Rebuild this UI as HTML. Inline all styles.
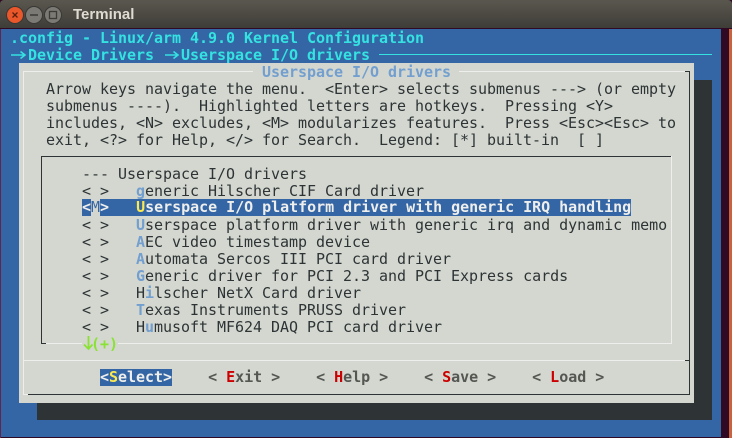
<!DOCTYPE html>
<html><head><meta charset="utf-8"><title>Terminal</title>
<style>
html,body{margin:0;padding:0;width:732px;height:438px;overflow:hidden;background:#300a24}
#w{position:relative;width:732px;height:438px;overflow:hidden;background:#300a24}
.a{position:absolute}
.r{position:absolute;left:1px;margin-top:1px;white-space:pre;height:17px;line-height:17px;font-family:"DejaVu Sans Mono","Liberation Mono",monospace;font-size:15px;letter-spacing:-0.03px;color:#2e3436}
.c{color:#34e2e2;font-weight:bold}
.h{color:#729fcf;font-weight:bold}
.b{color:#555753;font-weight:bold}
.e{color:#cc0000;font-weight:bold}
.s{background:#3465a4;color:#eeeeec;font-weight:bold}
.y{color:#fce94f;font-weight:bold}
.m{background:#d3d7cf;color:#3465a4;font-weight:normal}
.g{color:#8ae234;font-weight:bold}
</style></head><body><div id="w">
<div class="a" style="left:0;top:0;width:732px;height:29px;background:linear-gradient(#5a574f,#3f3d38);border-bottom:1px solid #300a24;box-sizing:border-box;border-radius:4px 4px 0 0"></div>
<svg class="a" style="left:0;top:0" width="80" height="28">
<circle cx="15" cy="15" r="8.5" fill="#e9572a" stroke="#3a3835"/>
<path d="M12.5 12.5l5 5M17.5 12.5l-5 5" stroke="#5a2110" stroke-width="1.3"/>
<circle cx="34" cy="15" r="8.5" fill="#7b7a74" stroke="#3a3835"/>
<path d="M30 15h8" stroke="#3c3b37" stroke-width="1.5"/>
<circle cx="53" cy="15" r="8.5" fill="#7b7a74" stroke="#3a3835"/>
<rect x="49.5" y="11.5" width="7" height="7" fill="none" stroke="#3c3b37" stroke-width="1.3"/>
</svg>
<div class="a" style="left:73px;top:6px;height:18px;line-height:18px;font-family:'Liberation Sans',sans-serif;font-weight:bold;font-size:15px;color:#dfdbd2">Terminal</div>

<div class="a" style="left:1px;top:29px;width:720px;height:408px;background:#3465a4"></div>
<div class="a" style="left:729px;top:29px;width:3px;height:409px;background:#c8623f"></div>
<div class="a" style="left:0;top:29px;width:1px;height:409px;background:#5e2750"></div>

<div class="r c" style="top:29px"> .config - Linux/arm 4.9.0 Kernel Configuration</div>
<div class="r c" style="top:46px">   Device Drivers   Userspace I/O drivers</div>
<svg class="a" style="left:0;top:46px" width="190" height="17"><path d="M11 9H25M20.5 5.5L25 9L20.5 12.5M165 9H178M173.5 5.5L178 9L173.5 12.5" fill="none" stroke="#34e2e2" stroke-width="1.6"/></svg>
<div class="a" style="left:379px;top:54px;width:333px;height:1px;background:#34e2e2"></div>

<div class="a" style="left:37px;top:80px;width:675px;height:340px;background:#2e3436"></div>
<div class="a" style="left:19px;top:63px;width:675px;height:340px;background:#d3d7cf"></div>

<!-- outer box -->
<div class="a" style="left:24px;top:71px;width:665px;height:1px;background:#eeeeec"></div>
<div class="a" style="left:23px;top:71px;width:1px;height:323px;background:#eeeeec"></div>
<div class="a" style="left:689px;top:71px;width:1px;height:324px;background:#2e3436"></div>
<div class="a" style="left:685px;top:71px;width:4px;height:1px;background:#2e3436"></div>
<div class="a" style="left:28px;top:394px;width:662px;height:1px;background:#2e3436"></div>
<div class="a" style="left:24px;top:360px;width:661px;height:1px;background:#eeeeec"></div>
<div class="a" style="left:685px;top:360px;width:4px;height:1px;background:#2e3436"></div>
<div class="a" style="left:23px;top:394px;width:5px;height:1px;background:#eeeeec"></div>

<!-- title -->
<div class="a" style="left:253px;top:63px;width:206px;height:17px;background:#d3d7cf"></div>
<div class="r h" style="top:63px">                             Userspace I/O drivers</div>

<div class="r" style="top:80px">     Arrow keys navigate the menu.  &lt;Enter&gt; selects submenus ---&gt; (or empty</div>
<div class="r" style="top:97px">     submenus ----).  Highlighted letters are hotkeys.  Pressing &lt;Y&gt;</div>
<div class="r" style="top:114px">     includes, &lt;N&gt; excludes, &lt;M&gt; modularizes features.  Press &lt;Esc&gt;&lt;Esc&gt; to</div>
<div class="r" style="top:131px">     exit, &lt;?&gt; for Help, &lt;/&gt; for Search.  Legend: [*] built-in  [ ]</div>

<!-- menu box -->
<div class="a" style="left:41px;top:156px;width:630px;height:1px;background:#2e3436"></div>
<div class="a" style="left:41px;top:156px;width:1px;height:188px;background:#2e3436"></div>
<div class="a" style="left:41px;top:343px;width:5px;height:1px;background:#2e3436"></div>
<div class="a" style="left:46px;top:343px;width:36px;height:1px;background:#eeeeec"></div>
<div class="a" style="left:118px;top:343px;width:554px;height:1px;background:#eeeeec"></div>
<div class="a" style="left:671px;top:156px;width:1px;height:188px;background:#eeeeec"></div>

<div class="r" style="top:165px">         --- Userspace I/O drivers</div>
<div class="r" style="top:182px">         &lt; &gt;   <span class="h">g</span>eneric Hilscher CIF Card driver</div>
<div class="r" style="top:198px;line-height:17px">         <span class="s" style="display:inline-block;height:17px;line-height:17px">&lt;<span class="m" style="display:inline-block;height:17px">M</span>&gt;   <span class="y">U</span>serspace I/O platform driver with generic IRQ handling</span></div>
<div class="r" style="top:216px">         &lt; &gt;   <span class="h">U</span>serspace platform driver with generic irq and dynamic memo</div>
<div class="r" style="top:233px">         &lt; &gt;   <span class="h">A</span>EC video timestamp device</div>
<div class="r" style="top:250px">         &lt; &gt;   <span class="h">A</span>utomata Sercos III PCI card driver</div>
<div class="r" style="top:267px">         &lt; &gt;   <span class="h">G</span>eneric driver for PCI 2.3 and PCI Express cards</div>
<div class="r" style="top:284px">         &lt; &gt;   H<span class="h">i</span>lscher NetX Card driver</div>
<div class="r" style="top:301px">         &lt; &gt;   <span class="h">T</span>exas Instruments PRUSS driver</div>
<div class="r" style="top:318px">         &lt; &gt;   H<span class="h">u</span>musoft MF624 DAQ PCI card driver</div>
<div class="r g" style="top:335px">          (+)</div>
<svg class="a" style="left:81px;top:335px" width="12" height="17"><path d="M7.5 1V14M3 9.5L7.5 14L11.5 9.5" fill="none" stroke="#8ae234" stroke-width="1.8"/></svg>

<div class="r b" style="top:368px">           <span class="s" style="display:inline-block;height:17px">&lt;<span class="y">S</span>elect&gt;</span>    &lt; <span class="e">E</span>xit &gt;    &lt; <span class="e">H</span>elp &gt;    &lt; <span class="e">S</span>ave &gt;    &lt; <span class="e">L</span>oad &gt;</div>
</div></body></html>
